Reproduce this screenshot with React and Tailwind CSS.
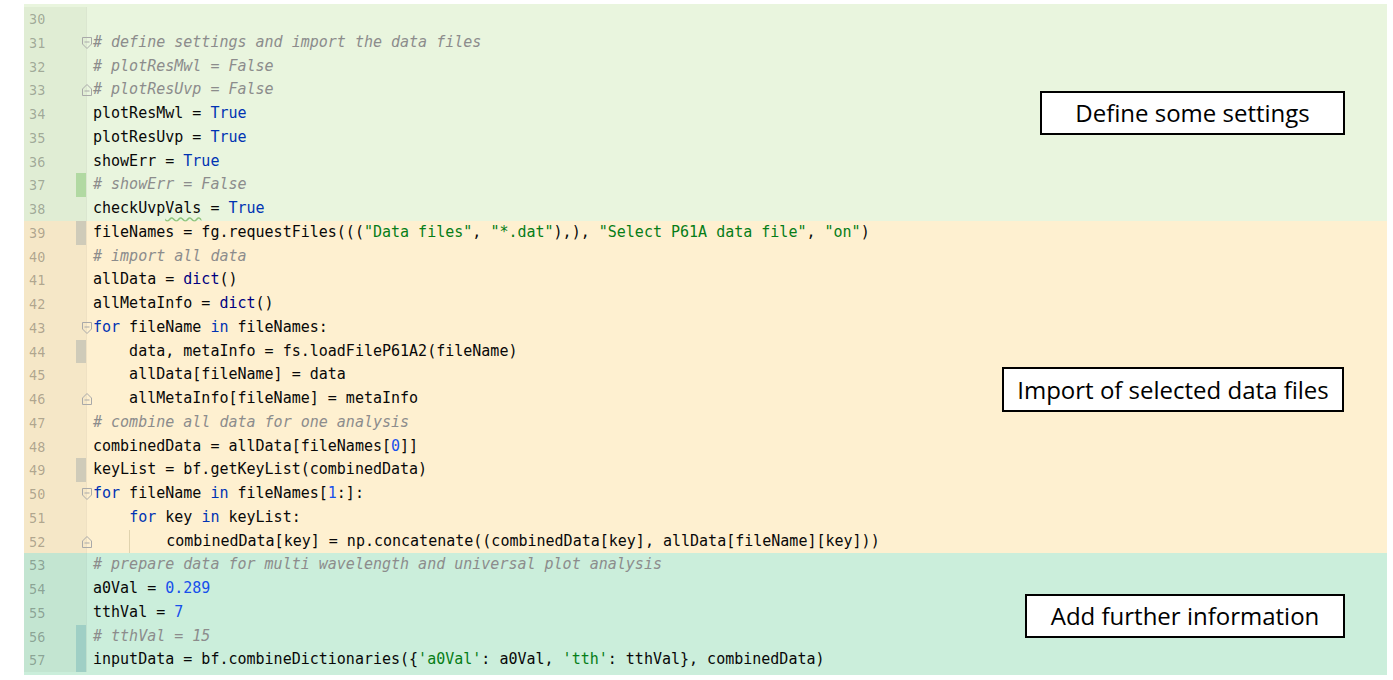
const TOK = {
  t: 'text-[#080808]',
  c: 'text-[#8c8c8c] italic',
  k: 'text-[#0033b3]',
  n: 'text-[#1750eb]',
  s: 'text-[#067d17]',
  b: 'text-[#000080]',
  w: 'text-[#080808] underline decoration-wavy decoration-[#8fc47c] underline-offset-[3px]',
};

// each line: [number, tokens, marker, fold, guide]
const sections = [
  {
    bg: 'bg-[#e9f5de]',
    gutter: 'bg-[#e0edd4]',
    pad: 'pt-[3px]',
    lines: [
      [30, []],
      [31, [['c', '# define settings and import the data files']], null, 'start'],
      [32, [['c', '# plotResMwl = False']]],
      [33, [['c', '# plotResUvp = False']], null, 'end'],
      [34, [['t', 'plotResMwl = '], ['k', 'True']]],
      [35, [['t', 'plotResUvp = '], ['k', 'True']]],
      [36, [['t', 'showErr = '], ['k', 'True']]],
      [37, [['c', '# showErr = False']], 'bg-[#b1d9a2]'],
      [38, [['t', 'checkUvp'], ['w', 'Vals'], ['t', ' = '], ['k', 'True']]],
    ],
  },
  {
    bg: 'bg-[#fef0d0]',
    gutter: 'bg-[#f5e7c7]',
    pad: '',
    lines: [
      [39, [['t', 'fileNames = fg.requestFiles((('], ['s', '"Data files"'], ['t', ', '], ['s', '"*.dat"'], ['t', '),), '], ['s', '"Select P61A data file"'], ['t', ', '], ['s', '"on"'], ['t', ')']], 'bg-[#cfcbb9]'],
      [40, [['c', '# import all data']]],
      [41, [['t', 'allData = '], ['b', 'dict'], ['t', '()']]],
      [42, [['t', 'allMetaInfo = '], ['b', 'dict'], ['t', '()']]],
      [43, [['k', 'for'], ['t', ' fileName '], ['k', 'in'], ['t', ' fileNames:']], null, 'start'],
      [44, [['t', '    data, metaInfo = fs.loadFileP61A2(fileName)']], 'bg-[#cfcbb9]'],
      [45, [['t', '    allData[fileName] = data']]],
      [46, [['t', '    allMetaInfo[fileName] = metaInfo']], null, 'end'],
      [47, [['c', '# combine all data for one analysis']]],
      [48, [['t', 'combinedData = allData[fileNames['], ['n', '0'], ['t', ']]']]],
      [49, [['t', 'keyList = bf.getKeyList(combinedData)']], 'bg-[#cfcbb9]'],
      [50, [['k', 'for'], ['t', ' fileName '], ['k', 'in'], ['t', ' fileNames['], ['n', '1'], ['t', ':]:']], null, 'start'],
      [51, [['t', '    '], ['k', 'for'], ['t', ' key '], ['k', 'in'], ['t', ' keyList:']]],
      [52, [['t', '    '], ['g', '    '], ['t', 'combinedData[key] = np.concatenate((combinedData[key], allData[fileName][key]))']], null, 'end'],
    ],
  },
  {
    bg: 'bg-[#cbeedb]',
    gutter: 'bg-[#c3e5d1]',
    pad: 'pb-[3px]',
    lines: [
      [53, [['c', '# prepare data for multi wavelength and universal plot analysis']]],
      [54, [['t', 'a0Val = '], ['n', '0.289']]],
      [55, [['t', 'tthVal = '], ['n', '7']]],
      [56, [['c', '# tthVal = 15']], 'bg-[#9fcfc5]'],
      [57, [['t', 'inputData = bf.combineDictionaries({'], ['s', "'a0Val'"], ['t', ': a0Val, '], ['s', "'tth'"], ['t', ': tthVal}, combinedData)']], 'bg-[#9fcfc5]'],
    ],
  },
];

// indent guide is just a left border on the whitespace span
TOK.g = 'border-l border-[#e0d3ae]';

function Fold({ kind }) {
  return (
    <svg
      width="10"
      height="12"
      viewBox="0 0 10 12"
      className="absolute left-[-5px] top-[6px]"
    >
      {kind === 'start' ? (
        <path d="M0.5 0.5H9.5V7L5 11.5L0.5 7Z" fill="none" stroke="#a9a9a9" />
      ) : (
        <path d="M0.5 11.5H9.5V5L5 0.5L0.5 5Z" fill="none" stroke="#a9a9a9" />
      )}
      <path d={kind === 'start' ? 'M2.5 5H7.5' : 'M2.5 7H7.5'} stroke="#a9a9a9" />
    </svg>
  );
}

function Line({ line, gutter }) {
  const [num, tokens, marker, fold] = line;
  return (
    <div className="flex h-[23.75px]">
      <div className={`flex w-[62px] shrink-0 ${gutter}`}>
        <div className="w-[52px] pl-[5px] pt-[3px] text-[13.5px] leading-[18px] text-black/30">
          {num}
        </div>
        <div className={`w-[10px] ${marker || ''}`}></div>
      </div>
      <div className="w-px bg-black/[0.06]"></div>
      <div className="relative flex-1 pl-[6px] text-[15px] leading-[23.75px] whitespace-pre">
        {fold && <Fold kind={fold} />}
        {tokens.map(([type, text], i) => (
          <span key={i} className={`inline-block h-full ${TOK[type]}`}>
            {text}
          </span>
        ))}
      </div>
    </div>
  );
}

function Note({ className, children }) {
  return (
    <div
      className={`absolute flex items-center justify-center border-2 border-black bg-white text-[24px] text-black font-['Open_Sans',sans-serif] ${className}`}
    >
      {children}
    </div>
  );
}

export default function App() {
  return (
    <div className="relative h-[680px] w-[1393px] overflow-hidden bg-white pl-[24px] pt-[4px] font-['DejaVu_Sans_Mono',monospace]">
      <div className="w-[1363px]">
        {sections.map((sec, i) => (
          <div key={i} className={`${sec.bg} ${sec.pad}`}>
            {sec.lines.map((line) => (
              <Line key={line[0]} line={line} gutter={sec.gutter} />
            ))}
          </div>
        ))}
      </div>

      <Note className="left-[1040px] top-[91px] h-[44px] w-[305px]">Define some settings</Note>
      <Note className="left-[1002px] top-[367px] h-[45px] w-[342px]">Import of selected data files</Note>
      <Note className="left-[1025px] top-[594px] h-[44px] w-[320px]">Add further information</Note>
    </div>
  );
}
